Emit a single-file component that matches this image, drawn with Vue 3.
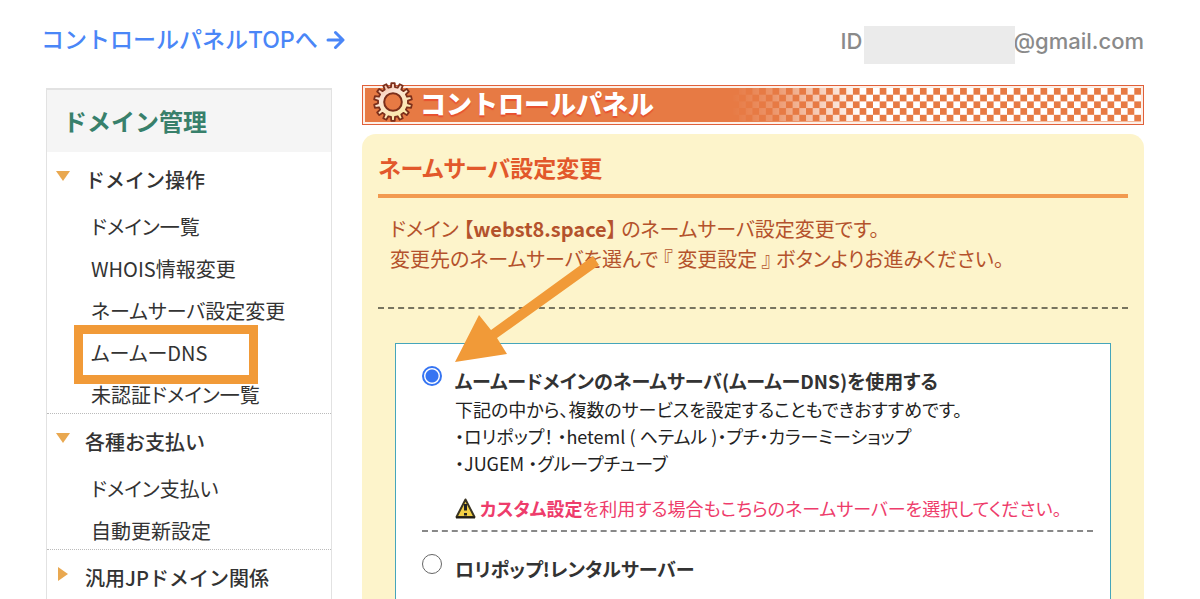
<script setup>
import { ref } from 'vue'

const sections = [
  {
    title: 'ドメイン操作',
    open: true,
    items: [
      { label: 'ドメイン一覧' },
      { label: 'WHOIS情報変更' },
      { label: 'ネームサーバ設定変更' },
      { label: 'ムームーDNS', marked: true },
      { label: '未認証ドメイン一覧' },
    ],
  },
  {
    title: '各種お支払い',
    open: true,
    items: [{ label: 'ドメイン支払い' }, { label: '自動更新設定' }],
  },
  { title: '汎用JPドメイン関係', open: false, items: [] },
]

const server = ref('muumuu')

// Outline of a cog wheel centred on 20,20
function cog(teeth, outer, inner) {
  const step = (Math.PI * 2) / teeth
  const points = []
  for (let i = 0; i < teeth; i++) {
    const a = i * step - Math.PI / 2
    for (const [offset, r] of [[-0.3, inner], [-0.2, outer], [0.2, outer], [0.3, inner]]) {
      const t = a + offset * step
      points.push(`${(20 + r * Math.cos(t)).toFixed(2)},${(20 + r * Math.sin(t)).toFixed(2)}`)
    }
  }
  return points.join(' ')
}
const cogPoints = cog(14, 19, 15)
</script>

<template>
  <div class="page">
    <header class="top">
      <a class="back" href="#">
        <span>コントロールパネルTOPへ</span>
        <svg width="19" height="20" viewBox="0 0 19 20" aria-hidden="true">
          <path d="M2 10H16.5M9.5 2.5L17 10L9.5 17.5" fill="none" stroke="currentColor" stroke-width="3" stroke-linecap="round" stroke-linejoin="round" />
        </svg>
      </a>
      <div class="account">
        <span>ID</span>
        <span class="masked"></span>
        <span class="mail">@gmail.com</span>
      </div>
    </header>

    <div class="columns">
      <nav class="side">
        <h2 class="side-title">ドメイン管理</h2>
        <section v-for="s in sections" :key="s.title" class="group">
          <h3 class="group-title">
            <svg v-if="s.open" class="mark" width="14" height="10" viewBox="0 0 14 10" aria-hidden="true">
              <path d="M0 0H14L7 10Z" fill="#e9a850" />
            </svg>
            <svg v-else class="mark" width="14" height="14" viewBox="0 0 14 14" aria-hidden="true">
              <path d="M2 0L12 7L2 14Z" fill="#e9a850" />
            </svg>
            <a href="#">{{ s.title }}</a>
          </h3>
          <ul v-if="s.open" class="items">
            <li v-for="i in s.items" :key="i.label" :class="{ marked: i.marked }">
              <a href="#">{{ i.label }}</a>
            </li>
          </ul>
        </section>
      </nav>

      <main class="main">
        <div class="banner">
          <svg class="cog" width="40" height="40" viewBox="0 0 40 40" aria-hidden="true">
            <defs>
              <linearGradient id="cogFill" x1="0" y1="0" x2="0.6" y2="1">
                <stop offset="0" stop-color="#f0a583" />
                <stop offset="0.4" stop-color="#fbe3d6" />
                <stop offset="1" stop-color="#fbe9a4" />
              </linearGradient>
            </defs>
            <polygon :points="cogPoints" fill="url(#cogFill)" stroke="#7c2f1b" stroke-width="1.8" stroke-linejoin="round" />
            <circle cx="20" cy="20" r="8.8" fill="#e77a44" stroke="#7c2f1b" stroke-width="2" />
          </svg>
          <h1 class="banner-title">コントロールパネル</h1>
          <svg class="checks" width="410" height="34" viewBox="0 0 410 34" aria-hidden="true">
            <defs>
              <pattern id="check" x="8" y="0" width="13.4" height="13.4" patternUnits="userSpaceOnUse">
                <path d="M0 0H6.7V6.7H0ZM6.7 6.7H13.4V13.4H6.7Z" fill="#fff" />
              </pattern>
              <linearGradient id="fade">
                <stop offset="0" stop-color="#000" />
                <stop offset="0.1" stop-color="#333" />
                <stop offset="0.32" stop-color="#fff" />
              </linearGradient>
              <mask id="fadeMask"><rect width="410" height="34" fill="url(#fade)" /></mask>
            </defs>
            <rect width="410" height="34" fill="url(#check)" mask="url(#fadeMask)" />
          </svg>
        </div>

        <div class="panel">
          <h2 class="panel-title">ネームサーバ設定変更</h2>
          <p class="lead">
            ドメイン 【<b>webst8.space</b>】 のネームサーバ設定変更です。<br />
            変更先のネームサーバを選んで 『 変更設定 』 ボタンよりお進みください。
          </p>

          <form class="options">
            <div class="option">
              <input id="ns-muumuu" v-model="server" type="radio" name="ns" value="muumuu" />
              <div class="option-body">
                <label for="ns-muumuu">ムームードメインのネームサーバ(ムームーDNS)を使用する</label>
                <p class="note">
                  下記の中から、複数のサービスを設定することもできおすすめです。<br />
                  ・ロリポップ！ ・heteml ( ヘテムル )・プチ・カラーミーショップ<br />
                  ・JUGEM ・グループチューブ
                </p>
                <p class="warn">
                  <svg width="21" height="21" viewBox="0 0 21 21" aria-hidden="true">
                    <path d="M10.5 1.5L19.5 19H1.5Z" fill="#f2cf45" stroke="#3a3423" stroke-width="2" stroke-linejoin="round" />
                    <path d="M1 19.5H20" stroke="#221e14" stroke-width="2" />
                    <path d="M10.5 6V12.5M10.5 15V17.5" stroke="#222" stroke-width="3" />
                  </svg>
                  <span><b>カスタム設定</b>を利用する場合もこちらのネームサーバーを選択してください。</span>
                </p>
              </div>
            </div>
            <div class="option">
              <input id="ns-lolipop" v-model="server" type="radio" name="ns" value="lolipop" />
              <div class="option-body">
                <label for="ns-lolipop">ロリポップ!レンタルサーバー</label>
              </div>
            </div>
            <svg class="arrow" width="146" height="108" viewBox="0 0 146 108" aria-hidden="true">
              <path d="M0 107L24 60L36 75L138 1L144 10L42 83L52 99Z" fill="#f19a38" />
            </svg>
          </form>
        </div>
      </main>
    </div>
  </div>
</template>

<style>
body {
  margin: 0;
  background: #fff;
}
</style>

<style scoped>
.page {
  box-sizing: border-box;
  height: 100vh;
  overflow: hidden;
  display: flex;
  flex-direction: column;
  padding: 26px 56px 0 46px;
  font-family: "Noto Sans CJK JP", sans-serif;
  font-feature-settings: "palt";
  color: #333;
}
h1, h2, h3, p, ul {
  margin: 0;
  padding: 0;
}
a {
  color: inherit;
  text-decoration: none;
}

.top {
  display: flex;
  justify-content: space-between;
  height: 38px;
  margin-left: -5px;
}
.back {
  display: flex;
  align-items: center;
  gap: 8px;
  height: 28px;
  font-family: Inter, "Noto Sans CJK JP", sans-serif;
  font-size: 23px;
  font-weight: 500;
  line-height: 26px;
  font-feature-settings: normal;
  color: #4a86f7;
}
.account {
  display: flex;
  font: 500 22px/30px Inter, sans-serif;
  color: #8a8a8a;
}
.masked {
  position: relative;
  width: 151px;
  height: 38px;
  margin: 0 -2px 0 2px;
  background: #ebebeb;
}

.columns {
  flex: 1;
  display: flex;
  align-items: stretch;
  gap: 30px;
  min-height: 0;
}
.side {
  flex: 0 0 284px;
  margin-top: 24px;
  border: 1px solid #e2e2e2;
  border-top-width: 2px;
  border-bottom: 0;
}
.side-title {
  padding-left: 16px;
  background: #f5f5f5;
  font-size: 24px;
  line-height: 62px;
  font-feature-settings: normal;
  color: #38806b;
}
.group + .group {
  border-top: 1px dotted #bbb;
}
.group-title {
  display: flex;
  align-items: center;
  gap: 15px;
  height: 54px;
  padding-left: 9px;
  font-size: 20px;
  font-weight: 500;
  font-feature-settings: normal;
}
.mark {
  margin-bottom: 6px;
}
.items {
  display: flex;
  flex-direction: column;
  gap: 6px;
  padding: 3px 0 0 44px;
  list-style: none;
  font-size: 20px;
  line-height: 36px;
}
.marked {
  position: relative;
}
.marked::after {
  content: "";
  position: absolute;
  inset: -10px auto -13px -17px;
  width: 166px;
  border: 9px solid #f19a38;
}

.main {
  flex: 1;
  min-width: 0;
  display: flex;
  flex-direction: column;
  gap: 9px;
  margin-top: 21px;
}
.banner {
  display: flex;
  align-items: center;
  height: 36px;
  padding: 1px;
  border: 1px solid #e0603a;
  background: #e77a44;
  box-shadow: inset 0 0 0 2px #fdf0e8;
}
.cog {
  flex: none;
  margin: -6px 7px 0 9px;
}
.banner-title {
  flex: 1;
  padding-bottom: 4px;
  white-space: nowrap;
  font-size: 26px;
  font-weight: 900;
  line-height: 32px;
  font-feature-settings: normal;
  color: #fff;
  text-shadow: 0 2px 1px #e8502f;
}
.checks {
  flex: none;
  margin-right: 1px;
}

.panel {
  flex: 1;
  display: flex;
  flex-direction: column;
  padding: 10px 16px 0;
  border-radius: 14px 14px 0 0;
  background: #fdf4cb;
}
.panel-title {
  border-bottom: 4px solid #f29a50;
  font-size: 23px;
  line-height: 46px;
  padding-bottom: 4px;
  color: #e2582b;
}
.lead {
  padding: 16px 12px 33px;
  border-bottom: 2px dashed #77745f;
  font-size: 20px;
  line-height: 30px;
  color: #b4522c;
}
.options {
  position: relative;
  flex: 1;
  margin: 34px 17px 0;
  padding: 0 17px 0 26px;
  border: 1px solid #45a5bb;
  border-bottom: 0;
  background: #fff;
}
.option {
  display: flex;
  gap: 13px;
  padding-top: 22px;
}
.option + .option {
  border-top: 2px dashed #888;
}
input[type="radio"] {
  appearance: none;
  flex: none;
  box-sizing: border-box;
  width: 20px;
  height: 20px;
  margin: 0;
  border: 1px solid #666;
  border-radius: 50%;
  background: #fff;
}
input[type="radio"]:checked {
  border: 2px solid #3574f2;
  background: radial-gradient(circle, #3574f2 6px, #fff 7px);
}
label {
  display: block;
  font-size: 19px;
  font-weight: 700;
  line-height: 30px;
}
.note {
  color: #222;
  font-size: 18px;
  line-height: 27px;
}
.warn {
  display: flex;
  align-items: center;
  gap: 4px;
  padding: 18px 0 8px;
  font-size: 18px;
  line-height: 27px;
  color: #ee3c6b;
}
.arrow {
  position: absolute;
  top: -89px;
  left: 59px;
}
</style>
